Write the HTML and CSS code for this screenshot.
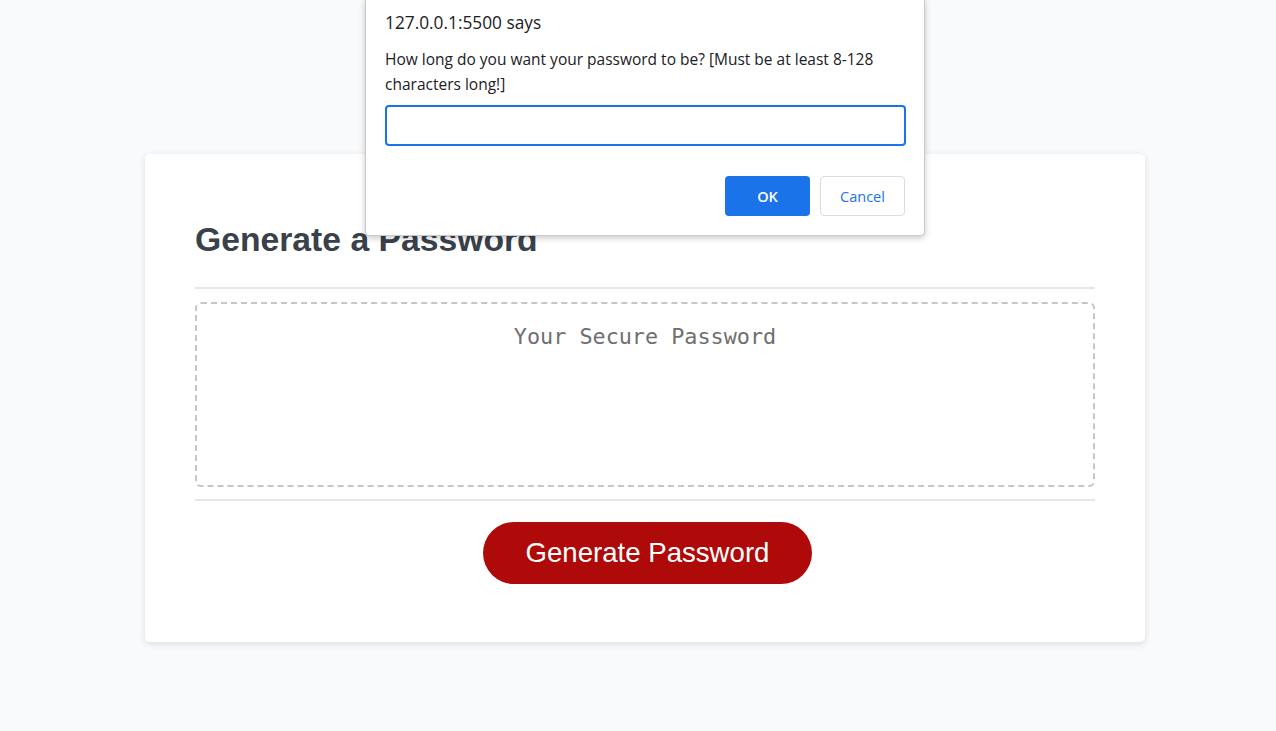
FILE: index.html
```html
<!DOCTYPE html>
<html lang="en">
<head>
<meta charset="utf-8">
<title>Password Generator</title>
<link rel="stylesheet" href="styles.css">
</head>
<body>
<div class="page">
  <div class="card">
    <div class="card-header">
      <h2 class="card-title">Generate a Password</h2>
    </div>
    <div class="card-body">
      <div class="password-box"><span class="placeholder">Your Secure Password</span></div>
    </div>
    <div class="card-footer">
      <button class="btn-generate">Generate Password</button>
    </div>
  </div>
</div>

<div class="dialog">
  <div class="dialog-title">127.0.0.1:5500 says</div>
  <div class="dialog-message">How long do you want your password to be? [Must be at least 8-128 characters long!]</div>
  <div class="dialog-input"></div>
  <div class="dialog-actions">
    <button class="dlg-btn dlg-ok">OK</button>
    <button class="dlg-btn dlg-cancel">Cancel</button>
  </div>
</div>
</body>
</html>
```
FILE: styles.css
```css
* { box-sizing: border-box; }

body {
  margin: 0;
  background: #f9fafb;
  font-family: "Liberation Sans", Arial, sans-serif;
  height: 731px;
  overflow: hidden;
}

.page {
  padding: 154px 0 0 145px;
}

.card {
  width: 1000px;
  background: #ffffff;
  border-radius: 5px;
  box-shadow: 0 2px 7px rgba(0, 0, 0, 0.12);
  padding: 0 50px;
}

.card-header {
  padding: 65px 0 28px;
  border-bottom: 2px solid #e6e6e6;
}

.card-title {
  margin: 0;
  font-size: 33.7px;
  line-height: 40px;
  font-weight: bold;
  color: #39414a;
}

.card-body {
  padding: 13px 0 12px;
}

.password-box {
  height: 185px;
  border: 2px dashed #c3c6cc;
  border-radius: 6px;
  padding-top: 20px;
  text-align: center;
}

.placeholder {
  font-family: "DejaVu Sans Mono", "Liberation Mono", monospace;
  font-size: 21.8px;
  color: #6f6f6f;
}

.card-footer {
  border-top: 2px solid #e6e6e6;
  padding: 21px 0 58px 5px;
  display: flex;
  justify-content: center;
}

.btn-generate {
  width: 329px;
  height: 62px;
  border: none;
  border-radius: 31px;
  background: #ae0a0a;
  color: #ffffff;
  font-family: "Liberation Sans", Arial, sans-serif;
  font-size: 27.6px;
  padding: 0;
}

/* Browser prompt dialog overlay */
.dialog {
  position: absolute;
  left: 365px;
  top: -1px;
  width: 560px;
  height: 237px;
  background: #ffffff;
  border: 1px solid #c9c9c9;
  border-radius: 0 0 4px 4px;
  box-shadow: 0 2px 6px rgba(0, 0, 0, 0.22);
  padding: 12px 18px 0 19px;
  font-family: "Open Sans", "Noto Sans", sans-serif;
  color: #202124;
}

.dialog-title {
  font-size: 17.3px;
  line-height: 22px;
}

.dialog-message {
  margin-top: 13px;
  font-size: 15.5px;
  line-height: 25px;
}

.dialog-input {
  margin-top: 8px;
  height: 41px;
  border: 2px solid #1a73e8;
  border-radius: 4px;
}

.dialog-actions {
  margin-top: 30px;
  display: flex;
  justify-content: flex-end;
  gap: 10px;
  padding-right: 1px;
}

.dlg-btn {
  width: 85px;
  height: 40px;
  border-radius: 4px;
  font-family: "Open Sans", "Noto Sans", sans-serif;
  font-size: 14.5px;
  padding: 0;
}

.dlg-ok {
  background: #1a73e8;
  border: none;
  color: #ffffff;
  font-weight: 600;
}

.dlg-cancel {
  background: #ffffff;
  border: 1px solid #dadce0;
  color: #1a73e8;
}
```
